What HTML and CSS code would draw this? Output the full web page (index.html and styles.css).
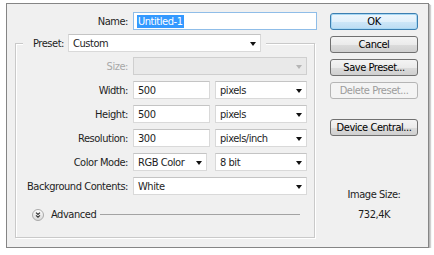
FILE: index.html
```html
<!DOCTYPE html>
<html>
<head>
<meta charset="utf-8">
<link rel="stylesheet" href="styles.css">
</head>
<body>
<div class="dialog">
  <div class="main">
    <div class="left">
      <div class="name-row">
        <span class="lbl">Name:</span>
        <div class="input focused"><span class="sel">Untitled-1</span></div>
      </div>
      <fieldset class="group">
        <legend class="legend">
          <span class="lbl">Preset:</span>
          <div class="select preset">Custom<i class="arrow"></i></div>
        </legend>
        <div class="grid">
          <span class="lbl disabled">Size:</span>
          <div class="select wide off"><i class="arrow gray"></i></div>

          <span class="lbl">Width:</span>
          <div class="pair"><div class="input">500</div><div class="select">pixels<i class="arrow"></i></div></div>

          <span class="lbl">Height:</span>
          <div class="pair"><div class="input">500</div><div class="select">pixels<i class="arrow"></i></div></div>

          <span class="lbl">Resolution:</span>
          <div class="pair"><div class="input">300</div><div class="select">pixels/inch<i class="arrow"></i></div></div>

          <span class="lbl">Color Mode:</span>
          <div class="pair"><div class="select mode">RGB Color<i class="arrow"></i></div><div class="select">8 bit<i class="arrow"></i></div></div>

          <span class="lbl">Background Contents:</span>
          <div class="select wide">White<i class="arrow"></i></div>
        </div>
        <div class="advanced">
          <svg class="adv-icon" width="12" height="12" viewBox="0 0 12 12">
            <defs>
              <linearGradient id="g" x1="0" y1="0" x2="0" y2="1">
                <stop offset="0" stop-color="#ffffff"/>
                <stop offset="1" stop-color="#d8d8d8"/>
              </linearGradient>
            </defs>
            <circle cx="6" cy="6" r="5.5" fill="url(#g)" stroke="#a9a9a9"/>
            <path d="M4 3.6 L6 5.4 L8 3.6 M4 6.4 L6 8.2 L8 6.4" fill="none" stroke="#333" stroke-width="1.1"/>
          </svg>
          <span class="adv-text">Advanced</span>
          <span class="rule"></span>
        </div>
      </fieldset>
    </div>
    <div class="right">
      <div class="btn default">OK</div>
      <div class="btn">Cancel</div>
      <div class="btn">Save Preset...</div>
      <div class="btn dis">Delete Preset...</div>
      <div class="btn central">Device Central...</div>
      <div class="info">
        <div class="info-lbl">Image Size:</div>
        <div class="info-val">732,4K</div>
      </div>
    </div>
  </div>
</div>
</body>
</html>
```

FILE: styles.css
```css
* { box-sizing: border-box; }
html, body { margin: 0; padding: 0; background: #ffffff; }
body {
  font-family: "DejaVu Sans Condensed", "DejaVu Sans", sans-serif;
  font-size: 11px;
  line-height: 13px;
  letter-spacing: -0.45px;
  color: #1e1e1e;
}
.dialog {
  margin: 3px 0 0 6px;
  width: 423px;
  height: 245px;
  background: #f0f0f0;
  border: 1px solid #858585;
  box-shadow: 1px 1px 0 #b8b8b8, 2px 2px 1px #d0d0d0;
}
.main {
  display: flex;
  padding: 8px 0 0 8px;
}
.left { width: 303px; }
.right {
  width: 88px;
  margin-left: 12px;
  padding-top: 1px;
  display: flex;
  flex-direction: column;
}
.lbl { text-align: right; white-space: nowrap; }
.lbl.disabled { color: #a8a8a8; }

.name-row {
  display: grid;
  grid-template-columns: 113px 184px;
  column-gap: 5px;
  align-items: center;
  height: 18px;
}
.input, .select {
  height: 18px;
  background: #ffffff;
  border: 1px solid #d9d9d9;
  border-top-color: #c4c4c4;
  padding: 1px 4px 0 4px;
  line-height: 15px;
  white-space: nowrap;
  position: relative;
}
.input.focused { border-color: #8fbde8; padding-left: 3px; }
.sel { background: #3399ff; color: #ffffff; padding: 0 1px; }

.group {
  margin: 4px 0 0 0;
  padding: 0 0 16px 0;
  width: 300px;
  min-width: 0;
  border: 1px solid #c9c9c9;
  box-shadow: inset 1px 1px 0 #ffffff, 1px 1px 0 #ffffff;
}
.legend {
  margin-left: 7px;
  padding: 0 5px 0 10px;
  background: #f0f0f0;
  display: flex;
  align-items: center;
  gap: 4px;
  height: 18px;
}
.select.preset { width: 193px; }
.arrow {
  position: absolute;
  right: 4px;
  top: 7px;
  width: 0;
  height: 0;
  border-left: 3.5px solid transparent;
  border-right: 3.5px solid transparent;
  border-top: 4px solid #111;
}
.arrow.gray { border-top-color: #b5b5b5; }

.grid {
  margin-top: 5px;
  display: grid;
  grid-template-columns: 112px 174px;
  column-gap: 5px;
  row-gap: 6px;
  align-items: center;
}
.select.wide { width: 174px; }
.select.off { background: #e9e9e9; border-color: #cfcfcf; }
.pair {
  display: grid;
  grid-template-columns: 77px 92px;
  column-gap: 5px;
}
.select.mode { width: 74px; }

.advanced {
  margin-top: 13px;
  height: 13px;
  padding: 0 14px 0 16px;
  display: flex;
  align-items: center;
}
.adv-icon { display: block; flex: none; }
.adv-text { margin-left: 7px; }
.rule {
  flex: 1;
  margin-left: 4px;
  height: 1px;
  background: #a3a3a3;
}

.btn {
  height: 17px;
  margin-bottom: 6px;
  border: 1px solid #707070;
  border-radius: 3px;
  background: linear-gradient(#f4f4f4 0%, #ebebeb 50%, #dcdcdc 51%, #cfcfcf 100%);
  text-align: center;
  line-height: 15px;
  color: #000;
  white-space: nowrap;
}
.btn.default {
  border-color: #3c7fb1;
  background: linear-gradient(#eef7fd 0%, #e1f0fb 50%, #cde7f8 51%, #bcdcf3 100%);
  box-shadow: inset 0 0 0 1px #a8d8f4;
}
.btn.dis {
  border-color: #b5b5b5;
  background: #f4f4f4;
  color: #9c9c9c;
}
.btn.central { margin-top: 14px; }
.info {
  margin-top: 46px;
  text-align: center;
}
.info-val { margin-top: 7px; }
```
